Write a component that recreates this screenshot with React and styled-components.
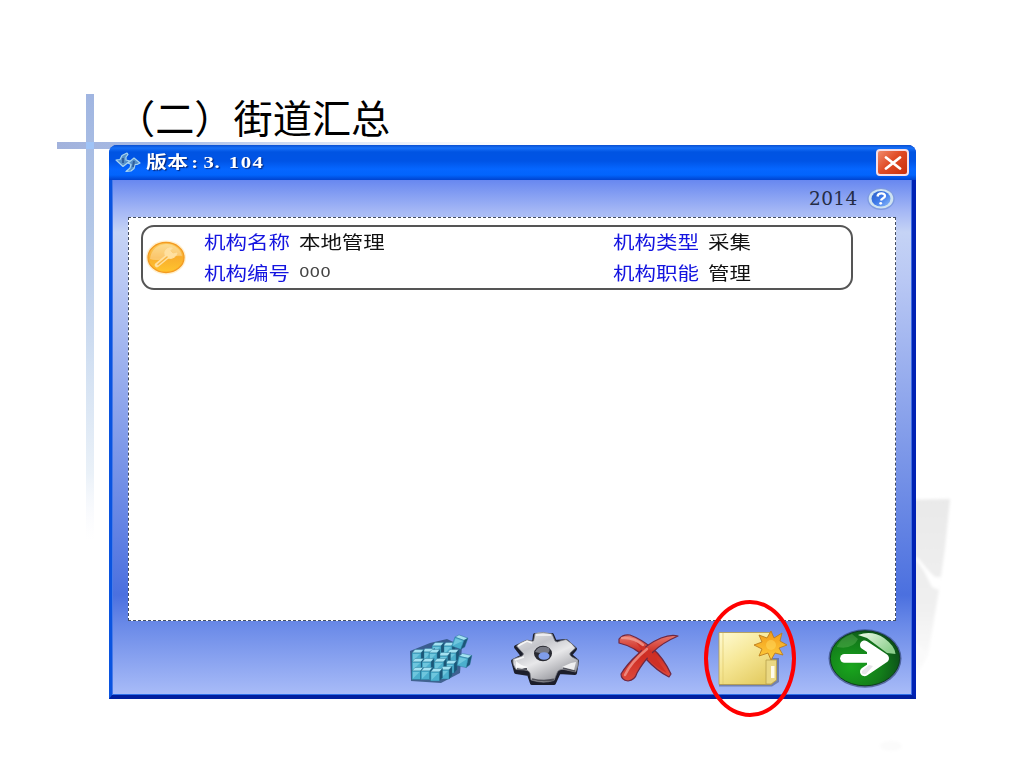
import React from 'react'
import styled, { createGlobalStyle } from 'styled-components'

const CELLS = [
  { label: '机构名称', value: '本地管理' },
  { label: '机构类型', value: '采集' },
  { label: '机构编号', value: '000', digits: true },
  { label: '机构职能', value: '管理' },
]

const CUBES = [
  [39, 20, 9],
  [28, 20, 9],
  [18, 26, 9.5],
  [8, 27, 9],
  [43, 27, 9],
  [34, 30, 9.5],
  [25, 27, 8],
  [8, 36, 9],
  [18, 36, 9],
  [41, 38, 9],
  [30, 36, 9.5],
  [8, 45, 8.5],
  [17, 45, 8.7],
  [36, 44, 9],
  [26.5, 46, 9],
]

export default function App() {
  return (
    <Slide>
      <GlobalStyle />
      <Backdrop />
      <Heading>（二）街道汇总</Heading>
      <Window>
        <TitleBar>
          <SyncIcon />
          <Caption>
            版本<Colon>:</Colon>
            <Major>3.</Major>
            <Minor>104</Minor>
          </Caption>
          <CloseButton aria-label="close">
            <svg width="18" height="14" viewBox="0 0 18 14">
              <path d="M2 1.5 16 12.5M16 1.5 2 12.5" stroke="#fff" strokeWidth="2.8" strokeLinecap="round" />
            </svg>
          </CloseButton>
        </TitleBar>
        <Body>
          <YearRow>
            <Year>2014</Year>
            <HelpIcon />
          </YearRow>
          <Panel>
            <Card>
              <KeyIcon />
              <Fields>
                {CELLS.map((cell) => (
                  <Field key={cell.label}>
                    <Label>{cell.label}</Label>
                    <Value $digits={cell.digits}>{cell.value}</Value>
                  </Field>
                ))}
              </Fields>
            </Card>
          </Panel>
          <Toolbar>
            <CubesIcon />
            <GearIcon />
            <DeleteIcon />
            <FolderIcon />
            <NextIcon />
          </Toolbar>
        </Body>
      </Window>
      <Highlight />
    </Slide>
  )
}

const Backdrop = () => (
  <BackdropSvg width="1024" height="768" viewBox="0 0 1024 768">
    <defs>
      <linearGradient id="barV" x1="0" y1="0" x2="0" y2="1">
        <stop offset="0" stopColor="#a0b5e1" />
        <stop offset=".3" stopColor="#b3c7e7" />
        <stop offset=".6" stopColor="#d2e0f2" />
        <stop offset=".85" stopColor="#eaf1f8" />
        <stop offset="1" stopColor="#f6f7fd" stopOpacity="0" />
      </linearGradient>
      <linearGradient id="barH">
        <stop offset="0" stopColor="#a2b2dc" />
        <stop offset=".25" stopColor="#a9bee8" />
        <stop offset="1" stopColor="#e8eff8" stopOpacity="0" />
      </linearGradient>
      <linearGradient id="shade" x1="0" y1="0" x2="0" y2="1">
        <stop offset="0" stopColor="#e9e9e9" />
        <stop offset=".6" stopColor="#f0f0f0" />
        <stop offset="1" stopColor="#fff" />
      </linearGradient>
      <filter id="soft">
        <feGaussianBlur stdDeviation="1.5" />
      </filter>
    </defs>
    <rect x="86" y="94" width="8" height="446" fill="url(#barV)" />
    <rect x="57" y="142" width="500" height="7" fill="url(#barH)" />
    <rect x="86" y="142" width="8" height="7" fill="#9fc3f7" />
    <g filter="url(#soft)">
      <path d="M900 500 950 499 945 548 939 590 928 655 914 682 900 682Z" fill="url(#shade)" />
      <path d="M914 557 924 571 932 587 939 590 941 577 935 577 928 570 918 558Z" fill="#fff" />
      <path d="M914 640 928 655 922 664 914 668Z" fill="#fafafa" />
      <ellipse cx="891" cy="746" rx="11" ry="5" fill="#fbfbfb" />
    </g>
  </BackdropSvg>
)

const SyncIcon = () => (
  <svg width="26" height="22" viewBox="0 0 26 22">
    <g fill="#5590c8" stroke="#a9d5f0" strokeWidth="1.2" strokeLinejoin="round">
      <path d="M12 1 7 3.500 5 7.500 1 8 8 14.500 15 9 11 8 11 5 13 2.500Z" />
      <path d="M11 19.500 16 19 19 16.500 20 12.500 22 12.500 25 11 19 6 13 11 16 12.500 15 16Z" />
    </g>
    <path d="M8 6 8 11M19 9 18 15" stroke="#2f5f9e" strokeWidth="2" />
  </svg>
)

const HelpIcon = () => (
  <svg width="28" height="24" viewBox="0 0 28 24">
    <defs>
      <linearGradient id="help" x1="0" y1="0" x2="1" y2="1">
        <stop offset="0" stopColor="#2a5cc5" />
        <stop offset=".5" stopColor="#3f7bea" />
        <stop offset="1" stopColor="#8fbcfa" />
      </linearGradient>
    </defs>
    <ellipse cx="14" cy="12" rx="13.700" ry="11" fill="#7f9be0" />
    <ellipse cx="14" cy="11.800" rx="12.300" ry="9.800" fill="#cfe3f1" />
    <ellipse cx="14" cy="11.800" rx="9.500" ry="7.800" fill="url(#help)" />
    <path d="M10.500 9.500C11 5.500 18 5.500 18 9 18 11.500 14.500 11 14 13.500" fill="none" stroke="#fff" strokeWidth="2.300" />
    <circle cx="13.700" cy="16.300" r="1.400" fill="#fff" />
  </svg>
)

const KeyIcon = () => (
  <svg width="42" height="38" viewBox="0 0 42 38">
    <defs>
      <linearGradient id="orb" x1="0" y1="0" x2="0" y2="1">
        <stop offset="0" stopColor="#fbd066" />
        <stop offset=".5" stopColor="#f9ae2d" />
        <stop offset="1" stopColor="#ffc52e" />
      </linearGradient>
    </defs>
    <ellipse cx="21" cy="18.500" rx="20" ry="17" fill="#fff0cf" />
    <ellipse cx="21" cy="18.500" rx="18" ry="15" fill="url(#orb)" stroke="#f49b22" strokeWidth="1.300" />
    <path d="M5 20C6 9 15 5 22 5 31 6 36 11 37 17 27 15 15 24 5 20Z" fill="#fff" opacity=".3" />
    <g fill="none" stroke="#ffe0a0" strokeLinecap="round">
      <path d="M23 17 12 26" strokeWidth="4.500" />
      <path d="M27 9C21 8 18 13 21 18 25 21 31 19 32 14L28 15 25 12Z" fill="#ffe0a0" strokeWidth="1" />
      <path d="M22 18 13 25.500" stroke="#f8b440" strokeWidth="1.500" />
    </g>
  </svg>
)

const CubesIcon = () => (
  <Tool width="72" height="66" viewBox="0 0 72 66">
    <path d="M6 25 26 17 43 13 58 20 56 47 37 57 7 55Z" fill="#23486f" opacity=".75" />
    {CUBES.map(([x, y, s]) => (
      <Cube key={`${x}-${y}`} x={x} y={y} s={s} />
    ))}
    <g transform="rotate(20 54 16)">
      <Cube x={49.500} y={12.500} s={9.500} />
    </g>
    <g transform="rotate(12 60 35)">
      <Cube x={54} y={31.500} s={9.500} />
    </g>
  </Tool>
)

const Cube = ({ x, y, s }) => (
  <g stroke="#21708f" strokeWidth=".4">
    <path d={`M${x} ${y}l3-3.500h${s}l-3 3.500z`} fill="#a4e2f2" />
    <path d={`M${x + s} ${y}l3-3.500v${s}l-3 3.500z`} fill="#1c5677" />
    <rect x={x} y={y} width={s} height={s} fill="#4bafcd" />
    <path d={`M${x + 1} ${y + s - 1}v${2 - s}h${s - 2}z`} fill="#7dd0e4" stroke="none" opacity=".7" />
  </g>
)

const GearIcon = () => (
  <Tool width="74" height="66" viewBox="0 0 74 66">
    <defs>
      <linearGradient id="steel" x1="0" y1="0" x2=".6" y2="1">
        <stop offset="0" stopColor="#f0f0f2" />
        <stop offset=".35" stopColor="#c4c5ca" />
        <stop offset=".6" stopColor="#e8e8ea" />
        <stop offset="1" stopColor="#97989e" />
      </linearGradient>
    </defs>
    <path
      d="M27 9 44 9 47 16 58 15 67 23 62 29 69 35 67 47 51 46 46 57 24 57 21 48 8 46 5 35 15 30 8 21 19 16 26 17Z"
      fill="#1c1e2b"
      stroke="#1c1e2b"
      strokeWidth="4"
      strokeLinejoin="round"
    />
    <path
      d="M27 7.500Q35 5 44 8L47 15Q49 17 52 15L58 13.500Q64 17 67.500 22L62 27Q61 29 64 31L70 34Q71 40 67.500 46L56 43.500Q50 43 49 47L46 54.500Q35 58 23 54L22 47Q21 44 16 44L8 43.500Q4 38 5 33L14 30Q17 28 14 26L8.500 20Q12 16 19 14L24 15Q26 16 26 13Z"
      fill="url(#steel)"
      stroke="#7a7b82"
      strokeWidth=".7"
    />
    <path d="M10 20 19 15 24 17M28 9 43 9M7 34 16 31" fill="none" stroke="#fff" strokeWidth="1.500" opacity=".8" />
    <path d="M24 53Q35 56 46 53.500M9 42.500 19 43M55 42 67 45" fill="none" stroke="#505159" strokeWidth="1.800" />
    <path d="M8 35Q13 40 20 41L14 43 8 42ZM54 41 63 37 68 36 66 44Z" fill="#fff" opacity=".8" />
    <ellipse cx="35" cy="27.500" rx="9" ry="7.800" fill="#292a32" />
    <path d="M27 26Q31 18 41 22 43 26 38 28 31 27 27 26Z" fill="#777982" />
    <ellipse cx="36" cy="30" rx="5.500" ry="3.800" fill="#7f9de9" />
  </Tool>
)

const DeleteIcon = () => (
  <Tool width="68" height="66" viewBox="0 0 68 66">
    <defs>
      <linearGradient id="red" x1="0" y1="0" x2="0" y2="1">
        <stop offset="0" stopColor="#e8776c" />
        <stop offset=".4" stopColor="#cc2a20" />
        <stop offset="1" stopColor="#de4a3c" />
      </linearGradient>
    </defs>
    <g stroke="#6d2843" strokeWidth="1.200" strokeLinejoin="round">
      <path d="M5 13Q9 8 16 9 27 13 38 22 49 31 57 48L55 51Q43 45 32 33 22 21 5 17Z" fill="url(#red)" />
      <path d="M64 10Q57 8 47 12 33 18 24 28 13 38 7 48 7 54 14 55 21 54 23 47 29 36 39 26 48 17 64 10Z" fill="url(#red)" />
    </g>
    <path d="M22 16 36 24 53 47Q42 42 32 30Z" fill="#cf3026" />
    <path d="M8 12Q20 11 29 19M11 49Q17 36 33 23" fill="none" stroke="#f5a59a" strokeWidth="2.500" opacity=".7" strokeLinecap="round" />
  </Tool>
)

const FolderIcon = () => (
  <Tool width="76" height="66" viewBox="0 0 76 66">
    <defs>
      <linearGradient id="paper" x1="0" y1="0" x2=".7" y2="1">
        <stop offset="0" stopColor="#fffbd2" />
        <stop offset=".5" stopColor="#f6e796" />
        <stop offset="1" stopColor="#e4cc63" />
      </linearGradient>
      <linearGradient id="star" x1="0" y1="0" x2="0" y2="1">
        <stop offset="0" stopColor="#f29a18" />
        <stop offset="1" stopColor="#ffcf3e" />
      </linearGradient>
    </defs>
    <path d="M5 9H59V32H65V56L58 60.500H5Z" fill="#4c5878" opacity=".55" />
    <path d="M5 6.500H57V34H62.500V54L57 58.500H5Z" fill="url(#paper)" stroke="#b59b46" strokeWidth=".8" />
    <path d="M9 7V58" stroke="#dfc86b" strokeWidth=".7" />
    <path d="M52 34V58H57L62.500 54V34Z" fill="#ead883" stroke="#b8a14c" strokeWidth=".8" />
    <rect x="57" y="40" width="3.500" height="12" fill="#fffceb" />
    <path
      d="M57 5 60 12 68 7 66 15 73 19 65 22 69 29 61 27 57 34 54 27 45 30 48 23 40 19 48 16 45 9 53 12Z"
      fill="url(#star)"
      stroke="#bd7d1c"
      strokeWidth=".9"
    />
    <circle cx="57" cy="19" r="5" fill="#ffdc60" opacity=".5" />
  </Tool>
)

const NextIcon = () => (
  <Tool width="80" height="66" viewBox="0 0 80 66">
    <defs>
      <radialGradient id="green" cx=".3" cy=".65" r=".75">
        <stop offset="0" stopColor="#19a61d" />
        <stop offset=".6" stopColor="#137d1a" />
        <stop offset="1" stopColor="#0b4d18" />
      </radialGradient>
      <linearGradient id="gloss" x1="0" y1="0" x2="1" y2=".6">
        <stop offset="0" stopColor="#eefbe9" />
        <stop offset="1" stopColor="#8dcf8d" />
      </linearGradient>
    </defs>
    <ellipse cx="40" cy="32.500" rx="36.500" ry="29.300" fill="#1c2e58" opacity=".55" />
    <ellipse cx="40" cy="32.300" rx="34.700" ry="27.500" fill="url(#green)" stroke="#0c3d1d" />
    <path d="M33 9Q47 4 59 12 70 20 70.500 28L62 27 42 12Z" fill="url(#gloss)" />
    <path d="M12 20Q17 11 27 8L33 13Q28 24 12 21Z" fill="#8bd17d" opacity=".28" />
    <g fill="none" stroke="#fff" strokeLinecap="round" strokeLinejoin="round">
      <path d="M19.500 32.300H56" strokeWidth="8.800" />
      <path d="M39.500 19 59.500 32.300 39.500 45.700" strokeWidth="9" />
      <path d="M42 22 58 32.300 42 43Z" fill="#fff" stroke="none" />
    </g>
    <path d="M37 45 44 39 48 40 41 48Q36 49 37 45Z" fill="#cfcbd6" opacity=".5" />
  </Tool>
)

const GlobalStyle = createGlobalStyle`
  body {
    margin: 0;
    background: #fff;
  }
`

const Slide = styled.div`
  position: relative;
  box-sizing: border-box;
  width: 1024px;
  height: 768px;
  padding: 88px 0 0 109px;
  overflow: hidden;
  font-family: 'Noto Sans CJK SC', sans-serif;
`

const BackdropSvg = styled.svg`
  position: absolute;
  inset: 0;
`

const Heading = styled.h1`
  position: relative;
  height: 57px;
  margin: 0;
  padding-left: 7px;
  font-size: 39.2px;
  font-weight: 400;
  line-height: 57px;
  color: #000;
  white-space: nowrap;
`

const Window = styled.section`
  position: relative;
  display: flex;
  flex-direction: column;
  box-sizing: border-box;
  width: 807px;
  height: 554px;
  border: solid;
  border-width: 0 4px 4px 3px;
  border-color: #0a50dc #0022b4 #001f9f #0a54e0;
  border-radius: 8px 8px 0 0;
  background: #0a54e0;
`

const TitleBar = styled.header`
  display: flex;
  align-items: center;
  flex: none;
  box-sizing: border-box;
  height: 35px;
  margin: 0 -4px 0 -3px;
  padding: 0 7px 0 6px;
  border-radius: 8px 8px 0 0;
  background: linear-gradient(#0a4fd0 0, #1670f8 3px, #0054e2 7px, #0054e6 16px, #0566ff 24px, #0264fc 30px, #0043cf 100%);
`

const Caption = styled.div`
  flex: 1;
  padding-left: 5px;
  color: #fff;
  font-family: 'Liberation Serif', 'Noto Sans CJK SC', serif;
  font-size: 17px;
  font-weight: 700;
  line-height: 35px;
  letter-spacing: 0.5px;
  text-shadow: 1px 1px 1px #062a80;
  transform: scaleX(1.22);
  transform-origin: 5px 0;
`

const Colon = styled.span`
  margin: 0 4px 0 2px;
`
const Major = styled.span`
  margin-right: 7px;
`
const Minor = styled.span`
  letter-spacing: 1.2px;
`

const CloseButton = styled.button`
  display: flex;
  align-items: center;
  justify-content: center;
  width: 33px;
  height: 27px;
  padding: 0;
  border: 2px solid #f5dfe8;
  border-radius: 4px;
  background: linear-gradient(135deg, #f08a6c, #e04c27 45%, #c92f0b);
`

const Body = styled.div`
  flex: 1;
  display: flex;
  flex-direction: column;
  background: linear-gradient(#6888f0 0, #a3b6f5 30px, #c5d3f5 52px, #b9c8f4 100px, #4b70df 415px, #6a8ae8 445px, #a9bcf8 100%);
  box-shadow: inset 1px 0 #477ae8, inset -1px 0 #3d6ce5, inset 0 -1px #2e6fe8;
`

const YearRow = styled.div`
  display: flex;
  align-items: center;
  justify-content: flex-end;
  height: 37px;
  padding-right: 17px;
`

const Year = styled.span`
  width: 58px;
  color: #252c45;
  font-family: 'DejaVu Serif', serif;
  font-size: 18.5px;
  letter-spacing: 0.4px;
  line-height: 37px;
`

const Panel = styled.main`
  box-sizing: border-box;
  width: 768px;
  height: 404px;
  margin-left: 16px;
  padding: 7px 0 0 12px;
  border: 1px dashed #444d60;
  background: #fff;
`

const Card = styled.div`
  display: flex;
  align-items: center;
  box-sizing: border-box;
  width: 712px;
  height: 65px;
  padding-left: 2px;
  border: 2px solid #555;
  border-radius: 13px;
`

const Fields = styled.div`
  display: grid;
  grid-template-columns: 409px 220px;
  grid-template-rows: 31px 31px;
  margin: -2px 0 0 17px;
`

const Field = styled.div`
  display: flex;
  align-items: center;
`

// glyphs are stretched sideways, like the bitmap font of the dialog
const Label = styled.span`
  width: 95px;
  color: #1414e0;
  font-size: 18px;
  line-height: 31px;
  white-space: nowrap;
  transform: scaleX(1.195);
  transform-origin: 0 50%;
`

const Value = styled.span`
  color: ${(props) => (props.$digits ? '#444' : '#111')};
  font-family: ${(props) => (props.$digits ? "'DejaVu Sans'" : "'Noto Sans CJK SC'")}, sans-serif;
  font-size: ${(props) => (props.$digits ? '14px' : '18px')};
  line-height: 31px;
  transform: scaleX(1.19);
  transform-origin: 0 50%;
`

const Toolbar = styled.footer`
  display: grid;
  grid-template-columns: 72px 74px 68px 76px 80px;
  column-gap: 32px;
  justify-content: end;
  padding: 5px 7px 0 0;
`

const Tool = styled.svg`
  display: block;

  &:not(:last-child) {
    margin-left: -3px;
  }
`

const Highlight = styled.div`
  position: absolute;
  left: 704px;
  top: 600px;
  box-sizing: border-box;
  width: 92px;
  height: 117px;
  border: 4px solid #f00;
  border-radius: 50%;
`
